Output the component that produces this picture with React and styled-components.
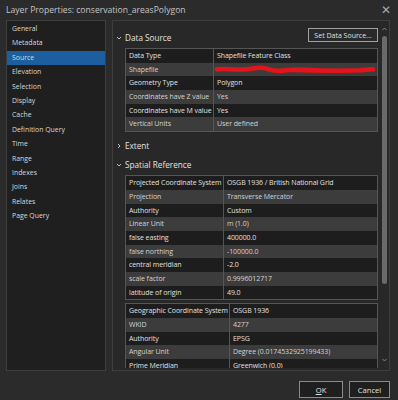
import React from "react";
import styled, { createGlobalStyle } from "styled-components";

const GlobalStyle = createGlobalStyle`
  html, body {
    margin: 0;
    padding: 0;
    background: #2b2b2b;
  }
  body {
    font-family: "Open Sans", "Noto Sans", sans-serif;
    color: #dcdcdc;
  }
`;

const Window = styled.div`
  width: 398px;
  height: 400px;
  background: #2b2b2b;
  display: flex;
  flex-direction: column;
  overflow: hidden;
`;

const TitleBar = styled.div`
  height: 20px;
  display: flex;
  align-items: center;
  justify-content: space-between;
  padding: 0 6px;
  box-sizing: border-box;
`;

const Title = styled.div`
  font-size: 8.6px;
  color: #c4c4c4;
  white-space: nowrap;
`;

const Close = styled.div`
  font-size: 12px;
  color: #a8a8a8;
  line-height: 1;
  margin-right: 1px;
`;

const Main = styled.div`
  display: flex;
  gap: 6px;
  padding: 0 8px 0 6px;
  height: 351px;
`;

const Nav = styled.div`
  width: 100px;
  box-sizing: border-box;
  background: #1f1f1f;
  border: 1px solid #3e3e3e;
  padding-top: 1px;
`;

const NavItem = styled.div`
  height: 14.4px;
  line-height: 14.4px;
  padding-left: 5px;
  font-size: 6.9px;
  color: #d8d8d8;
  background: ${(p) => (p.$active ? "#1d5e9e" : "transparent")};
  white-space: nowrap;
`;

const Panel = styled.div`
  width: 278px;
  box-sizing: border-box;
  border: 1px solid #3e3e3e;
  background: #282828;
  display: flex;
  padding-bottom: 2px;
`;

const Content = styled.div`
  width: 267px;
  overflow: hidden;
  padding: 7px 2px 0 3px;
  box-sizing: border-box;
`;

const DataSourceHeader = styled.div`
  display: flex;
  justify-content: space-between;
  height: 20px;
`;

const SectionHeader = styled.div`
  display: flex;
  align-items: center;
  gap: 3px;
  height: 14px;
  line-height: 14px;
  font-size: 8.2px;
  color: #e2e2e2;
  margin-top: ${(p) => p.$top || 0}px;
  align-self: ${(p) => (p.$bottom ? "flex-end" : "auto")};
  padding-bottom: ${(p) => (p.$bottom ? 3 : 0)}px;
`;

const Chevron = styled.svg`
  width: 6px;
  height: 6px;
  flex: none;
`;

const SetButton = styled.div`
  height: 14px;
  width: 70px;
  box-sizing: border-box;
  border: 1px solid #a0a0a0;
  background: #2a2a2a;
  font-size: 7px;
  color: #e0e0e0;
  display: flex;
  align-items: center;
  justify-content: center;
`;

const Table = styled.div`
  margin: ${(p) => p.$top || 0}px 0 0 9px;
  border: 1px solid #555;
  display: grid;
  grid-template-columns: ${(p) => p.$label}px 1fr;
`;

const Cell = styled.div`
  height: 13.7px;
  line-height: 13.7px;
  font-size: 7px;
  letter-spacing: -0.08px;
  padding-left: 3px;
  white-space: nowrap;
  overflow: hidden;
  position: relative;
  color: ${(p) => (p.$odd ? "#d2d2d2" : "#e0e0e0")};
  background: ${(p) => (p.$odd ? "#3c3c3c" : "#1d1d1d")};
  border-right: ${(p) => (p.$label ? "1px solid #555" : "none")};
`;

const Scribble = styled.svg`
  position: absolute;
  left: 0;
  top: 0;
  width: 100%;
  height: 100%;
`;

const ScrollBar = styled.div`
  width: 9px;
  display: flex;
  flex-direction: column;
  align-items: center;
  padding-top: 6px;
  box-sizing: border-box;
`;

const Arrow = styled.svg`
  width: 5px;
  height: 4px;
  flex: none;
`;

const Thumb = styled.div`
  width: 5px;
  height: 248px;
  margin-top: 5px;
  border-radius: 3px;
  background: #6a6a6a;
`;

const Spacer = styled.div`
  flex: 1;
`;

const Footer = styled.div`
  display: flex;
  justify-content: flex-end;
  gap: 6px;
  padding: 10px 8px 0 0;
`;

const Button = styled.div`
  width: ${(p) => p.$w}px;
  height: 17px;
  box-sizing: border-box;
  border: 1px solid #8a8a8a;
  background: #1f1f1f;
  font-size: 7.6px;
  color: #e0e0e0;
  display: flex;
  align-items: center;
  justify-content: center;
`;

const Mnemonic = styled.span`
  text-decoration: underline;
`;

const navItems = [
  "General",
  "Metadata",
  "Source",
  "Elevation",
  "Selection",
  "Display",
  "Cache",
  "Definition Query",
  "Time",
  "Range",
  "Indexes",
  "Joins",
  "Relates",
  "Page Query",
];

const dataSource = [
  ["Data Type", "Shapefile Feature Class"],
  ["Shapefile", ""],
  ["Geometry Type", "Polygon"],
  ["Coordinates have Z value", "Yes"],
  ["Coordinates have M value", "Yes"],
  ["Vertical Units", "User defined"],
];

const projected = [
  ["Projected Coordinate System", "OSGB 1936 / British National Grid"],
  ["Projection", "Transverse Mercator"],
  ["Authority", "Custom"],
  ["Linear Unit", "m (1.0)"],
  ["false easting", "400000.0"],
  ["false northing", "-100000.0"],
  ["central meridian", "-2.0"],
  ["scale factor", "0.9996012717"],
  ["latitude of origin", "49.0"],
];

const geographic = [
  ["Geographic Coordinate System", "OSGB 1936"],
  ["WKID", "4277"],
  ["Authority", "EPSG"],
  ["Angular Unit", "Degree (0.0174532925199433)"],
  ["Prime Meridian", "Greenwich (0.0)"],
];

const Down = () => (
  <Chevron viewBox="0 0 6 6">
    <path d="M1 2 L3 4 L5 2" fill="none" stroke="#cfcfcf" strokeWidth="0.9" />
  </Chevron>
);

const Right = () => (
  <Chevron viewBox="0 0 6 6">
    <path d="M2 1 L4 3 L2 5" fill="none" stroke="#cfcfcf" strokeWidth="0.9" />
  </Chevron>
);

// red redaction stroke over the shapefile path
const Redaction = () => (
  <Scribble viewBox="0 0 165 14" preserveAspectRatio="none">
    <path
      d="M3 6.5 C12 5.5 22 7.5 32 6.5 C40 5.5 44 4.5 50 5 C56 6 58 8.5 66 8 C74 7.5 80 6 92 6.8 C110 8 130 8.2 148 7.5 C154 7 158 6 161 6.5"
      fill="none"
      stroke="#e3141b"
      strokeWidth="4.6"
      strokeLinecap="round"
    />
    <path
      d="M70 7.8 C95 8.6 125 8.8 150 7.8"
      fill="none"
      stroke="#e3141b"
      strokeWidth="3"
      strokeLinecap="round"
    />
  </Scribble>
);

const PropTable = ({ rows, label, top }) => (
  <Table $label={label} $top={top}>
    {rows.map(([k, v], i) => (
      <React.Fragment key={k + i}>
        <Cell $label $odd={i % 2 === 1}>{k}</Cell>
        <Cell $odd={i % 2 === 1}>{k === "Shapefile" ? <Redaction /> : v}</Cell>
      </React.Fragment>
    ))}
  </Table>
);

const App = () => {
  return (
    <Window>
      <GlobalStyle />
      <TitleBar>
        <Title>Layer Properties: conservation_areasPolygon</Title>
        <Close>✕</Close>
      </TitleBar>
      <Main>
        <Nav>
          {navItems.map((n) => (
            <NavItem key={n} $active={n === "Source"}>
              {n}
            </NavItem>
          ))}
        </Nav>
        <Panel>
          <Content>
            <DataSourceHeader>
              <SectionHeader $bottom>
                <Down />
                Data Source
              </SectionHeader>
              <SetButton>Set Data Source...</SetButton>
            </DataSourceHeader>
            <PropTable rows={dataSource} label={88} />
            <SectionHeader $top={7}>
              <Right />
              Extent
            </SectionHeader>
            <SectionHeader $top={5}>
              <Down />
              Spatial Reference
            </SectionHeader>
            <PropTable rows={projected} label={98} top={3} />
            <PropTable rows={geographic} label={104} top={3} />
          </Content>
          <ScrollBar>
            <Arrow viewBox="0 0 5 4">
              <path d="M0.5 3 L2.5 1 L4.5 3" fill="none" stroke="#9a9a9a" strokeWidth="0.8" />
            </Arrow>
            <Thumb />
            <Spacer />
            <Arrow viewBox="0 0 5 4" style={{ marginBottom: 6 }}>
              <path d="M0.5 1 L2.5 3 L4.5 1" fill="none" stroke="#9a9a9a" strokeWidth="0.8" />
            </Arrow>
          </ScrollBar>
        </Panel>
      </Main>
      <Footer>
        <Button $w={44}>
          <Mnemonic>O</Mnemonic>K
        </Button>
        <Button $w={41}>Cancel</Button>
      </Footer>
    </Window>
  );
};

export default App;
